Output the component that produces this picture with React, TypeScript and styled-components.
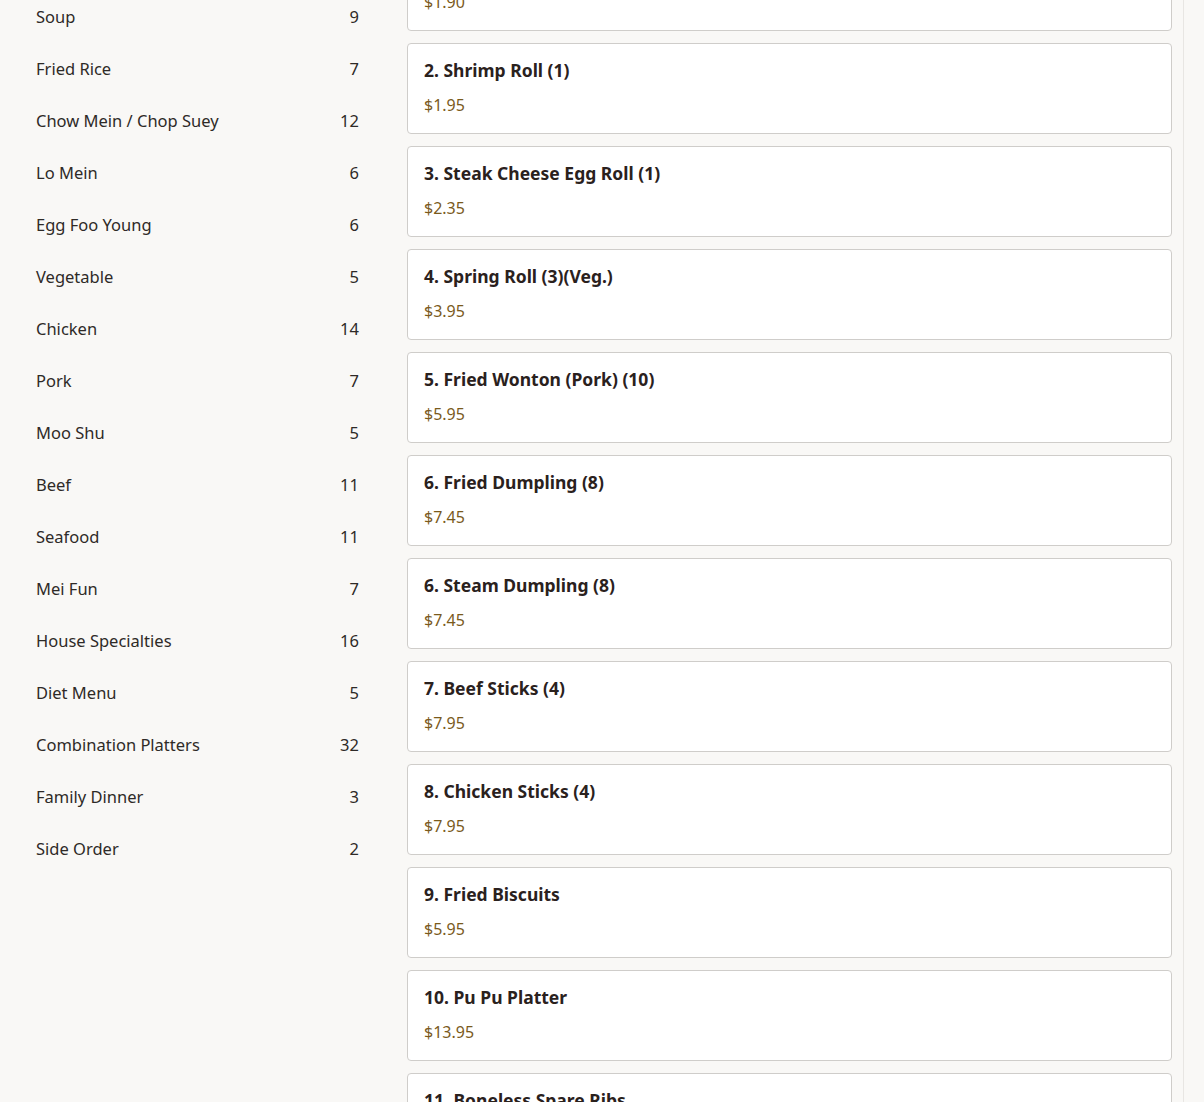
import React from "react";
import styled, { createGlobalStyle } from "styled-components";

const Global = createGlobalStyle`
  html, body { margin: 0; padding: 0; }
  *, *::before, *::after { box-sizing: border-box; }
  body {
    background: #f9f8f6;
    font-family: "Noto Sans", "Open Sans", sans-serif;
    overflow: hidden;
  }
`;

const Page = styled.div`
  display: flex;
  width: 1204px;
  height: 1102px;
  overflow: hidden;
  background: #f9f8f6;
`;

const Content = styled.div`
  display: flex;
  width: 1184px;
  border-right: 1px solid #e8e6e3;
`;

const Sidebar = styled.aside`
  width: 359px;
  padding-left: 36px;
  flex-shrink: 0;
`;

const CatList = styled.ul`
  list-style: none;
  margin: -10px 0 0;
  padding: 0;
`;

const CatRow = styled.li`
  display: flex;
  justify-content: space-between;
  align-items: center;
  height: 52px;
  font-size: 16.5px;
  color: #2e2a27;
`;

const Main = styled.main`
  flex: 1;
  padding-left: 48px;
  padding-right: 11px;
`;

const Cards = styled.div`
  display: flex;
  flex-direction: column;
  gap: 12px;
  margin-top: -60px;
`;

const Card = styled.div`
  height: 91px;
  background: #ffffff;
  border: 1px solid #cfcdca;
  border-radius: 4px;
  padding: 13px 16px 0;
`;

const Title = styled.div`
  font-size: 17.5px;
  font-weight: 700;
  color: #2a211d;
  line-height: 26px;
`;

const Price = styled.div`
  margin-top: 11px;
  font-size: 16px;
  color: #7a5a1c;
  line-height: 22px;
`;

const categories: [string, number][] = [
  ["Soup", 9],
  ["Fried Rice", 7],
  ["Chow Mein / Chop Suey", 12],
  ["Lo Mein", 6],
  ["Egg Foo Young", 6],
  ["Vegetable", 5],
  ["Chicken", 14],
  ["Pork", 7],
  ["Moo Shu", 5],
  ["Beef", 11],
  ["Seafood", 11],
  ["Mei Fun", 7],
  ["House Specialties", 16],
  ["Diet Menu", 5],
  ["Combination Platters", 32],
  ["Family Dinner", 3],
  ["Side Order", 2],
];

const items: [string, string][] = [
  ["1. Egg Roll (1)", "$1.90"],
  ["2. Shrimp Roll (1)", "$1.95"],
  ["3. Steak Cheese Egg Roll (1)", "$2.35"],
  ["4. Spring Roll (3)(Veg.)", "$3.95"],
  ["5. Fried Wonton (Pork) (10)", "$5.95"],
  ["6. Fried Dumpling (8)", "$7.45"],
  ["6. Steam Dumpling (8)", "$7.45"],
  ["7. Beef Sticks (4)", "$7.95"],
  ["8. Chicken Sticks (4)", "$7.95"],
  ["9. Fried Biscuits", "$5.95"],
  ["10. Pu Pu Platter", "$13.95"],
  ["11. Boneless Spare Ribs", "$9.95"],
];

export default function App() {
  return (
    <Page>
      <Global />
      <Content>
        <Sidebar>
          <CatList>
            {categories.map(([n, c]) => (
              <CatRow key={n}>
                <span>{n}</span>
                <span>{c}</span>
              </CatRow>
            ))}
          </CatList>
        </Sidebar>
        <Main>
          <Cards>
            {items.map(([t, p]) => (
              <Card key={t}>
                <Title>{t}</Title>
                <Price>{p}</Price>
              </Card>
            ))}
          </Cards>
        </Main>
      </Content>
    </Page>
  );
}
